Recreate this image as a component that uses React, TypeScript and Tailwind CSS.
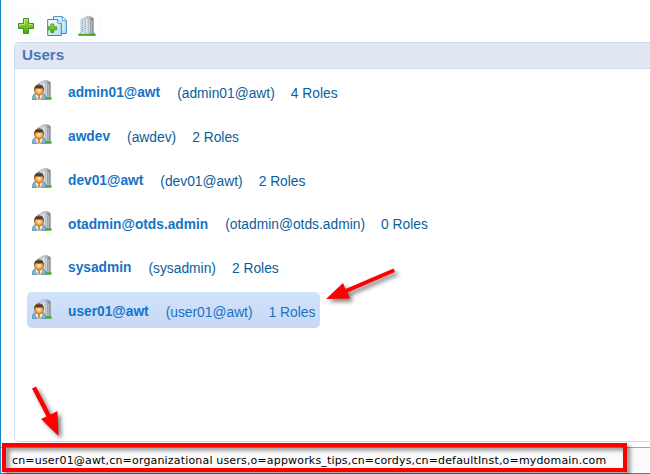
const users = [
  { name: 'admin01@awt', roles: 4 },
  { name: 'awdev', roles: 2 },
  { name: 'dev01@awt', roles: 2 },
  { name: 'otadmin@otds.admin', roles: 0 },
  { name: 'sysadmin', roles: 2 },
  { name: 'user01@awt', roles: 1, selected: true },
];

function Defs() {
  return (
    <svg className="absolute h-0 w-0" aria-hidden="true">
      <defs>
        <linearGradient id="green" x1="0" y1="0" x2="0" y2="1">
          <stop offset="0" stopColor="#a9dc45" />
          <stop offset="1" stopColor="#46a71b" />
        </linearGradient>
        <linearGradient id="side" x1="0" y1="0" x2="1" y2="0">
          <stop offset="0" stopColor="#c6c8ca" />
          <stop offset="1" stopColor="#777b80" />
        </linearGradient>
        <linearGradient id="paper" x1="0" y1="0" x2="1" y2="1">
          <stop offset="0" stopColor="#ffffff" />
          <stop offset="1" stopColor="#b4dcf5" />
        </linearGradient>
        <radialGradient id="face" cx="0.5" cy="0.48" r="0.5">
          <stop offset="0" stopColor="#fff0cf" />
          <stop offset="0.45" stopColor="#f8bf72" />
          <stop offset="1" stopColor="#dd8420" />
        </radialGradient>
      </defs>
    </svg>
  );
}

function PlusIcon() {
  return (
    <svg width="18" height="18" viewBox="0 0 18 18">
      <path d="M6.5 1.5h5v5h5v5h-5v5h-5v-5h-5v-5h5z" fill="url(#green)" stroke="#3c9415" strokeLinejoin="round" />
      <path d="M7.5 7.5v-5h3M2.5 10V7.5h5M11.5 7.5h4" fill="none" stroke="#c5ea76" strokeWidth="0.9" />
    </svg>
  );
}

function CopyIcon() {
  return (
    <svg width="20" height="20" viewBox="0 0 20 20">
      <path d="M6.5.7h9l3.800 3.800v13H6.500z" fill="url(#paper)" stroke="#3489c5" />
      <path d="M15.300.9v3.800h3.800" fill="#fff" stroke="#3489c5" strokeWidth="0.8" />
      <path d="M.7 3.500h10l3.600 3.600v12.400H.7z" fill="url(#paper)" stroke="#3489c5" />
      <path d="M10.600 3.700v3.600h3.500" fill="#fff" stroke="#3489c5" strokeWidth="0.8" />
      <path d="M3.800 8h3v2.800h2.800v3H6.800v2.800h-3v-2.800H1v-3h2.800z" fill="url(#green)" stroke="#369414" strokeWidth="0.8" />
    </svg>
  );
}

function Building() {
  return (
    <>
      <path d="M2.500 3.500 7 1.200 8.500.3h4l2.800 1.500v16.400H2.500z" fill="#b7bdc3" />
      <path d="M10 1.200 12.500.4l3 1.800V18H10z" fill="url(#side)" />
      <path d="M3.500 4 9.500 2v15.500l-6 .5z" fill="#dcecf7" />
      <path d="M4.800 4.200V17M7.300 3.200v14" stroke="#69aadb" strokeWidth="1.200" strokeDasharray="1.400 .7" />
      <path d="M11.500 4v13M13.800 5v12" stroke="#e2e7eb" strokeWidth="0.9" strokeDasharray="1.200 .9" />
    </>
  );
}

function BuildingIcon() {
  return (
    <svg width="18" height="20" viewBox="0 0 18 20">
      <path d="M.5 18 3 16.500h12l2.500 1.500v1.700H.5z" fill="#56ae2e" />
      <Building />
      <path d="M.5 18h17v1.600H.5z" fill="#4fa62c" />
    </svg>
  );
}

function UserIcon() {
  return (
    <svg width="20" height="20" viewBox="0 0 20 20" className="block shrink-0">
      <g transform="translate(3)"><Building /></g>
      <path d="M13 17.200h6.500v2.500H13z" fill="#4ca82e" />
      <path d="M.4 19.700c0-3.800.8-5.500 3.200-6.200h7c2.400.7 3.400 2.400 3.400 6.200z" fill="#7fb3d6" stroke="#4e7f9f" strokeWidth="0.7" />
      <path d="M3.400 14h7.200l-1.800 5.600H5.200z" fill="#f8fbfd" />
      <path d="M5.400 14h3.200L7.800 16l.8 2.400L7 19.600l-1.600-1.200.8-2.400z" fill="#f18a1c" />
      <ellipse cx="7" cy="10.700" rx="4.500" ry="4.600" fill="url(#face)" stroke="#a8611d" strokeWidth="0.6" />
      <path d="M2.300 10.700C1.700 6.800 3.900 4.500 7 4.500s5.300 2.300 4.700 6.200c-.6-1-.8-1.900-1.400-2.700-2.200.7-4.400.7-6.600 0-.6.800-.8 1.700-1.400 2.700z" fill="#5b371d" />
      <path d="M4.700 6.300c1.200-.9 3-.9 4.300-.3" fill="none" stroke="#93673f" strokeWidth="0.7" />
    </svg>
  );
}

export default function App() {
  return (
    <div className="relative flex h-[474px] w-[650px] flex-col overflow-hidden border-l border-[#168acb] bg-white font-['Liberation_Sans',Arial,sans-serif]">
      <Defs />
      <div className="flex h-[42px] shrink-0 items-end gap-[2px] pb-[2px] pl-[13px]">
        <button className="flex h-[27px] w-[27px] items-center justify-center rounded-md border border-[#fafafa] pr-[3px] pb-[2px]"><PlusIcon /></button>
        <button className="flex h-[27px] w-[28px] items-center justify-center rounded-md border border-[#fafafa] pb-[2px]"><CopyIcon /></button>
        <button className="flex h-[27px] w-[28px] items-center justify-center rounded-md border border-[#fafafa] pb-[2px]"><BuildingIcon /></button>
      </div>
      <main className="ml-[13px] flex h-[400px] shrink-0 flex-col overflow-hidden rounded-l-[5px] border border-r-0 border-[#cbdcf0]">
        <h1 className="h-[26px] shrink-0 border-b border-[#cbdcf0] bg-[#e1e7f3] pl-[7px] text-[15.200px] leading-[23px] font-bold text-[#4a78b5]">Users</h1>
        <div className="flex flex-col items-start gap-[7.800px] pt-[4px] pl-3">
          {users.map((u) => (
            <div
              key={u.name}
              className={`flex h-9 items-center rounded-[5px] px-[5px] ${u.selected ? 'bg-linear-to-b from-[#d2e3fc] to-[#c6d8f2]' : ''}`}
            >
              <div className="-mt-[2px]"><UserIcon /></div>
              <span className="mt-[5px] ml-4 text-[13.750px] font-bold text-[#1673c5]">{u.name}</span>
              <span className={`mt-[6.500px] ml-[17px] text-[13.800px] ${u.selected ? 'text-[#1673c5]' : 'text-[#095e9c]'}`}>({u.name})</span>
              <span className={`mt-[6.500px] ml-4 text-[13.800px] ${u.selected ? 'text-[#1673c5]' : 'text-[#095e9c]'}`}>{u.roles} Roles</span>
            </div>
          ))}
        </div>
      </main>
      <footer className="mt-[5px] flex h-[27px] shrink-0 flex-col bg-[#fbfbfb]">
        <div className="h-px bg-[#7caee9]" />
        <p className="flex h-[25px] items-center pt-[2px] pl-[11px] font-['DejaVu_Sans',Verdana,sans-serif] text-[11px] tracking-[0.175px] whitespace-nowrap text-black">
          cn=user01@awt,cn=organizational users,o=appworks_tips,cn=cordys,cn=defaultInst,o=mydomain.com
        </p>
        <div className="h-px bg-[#238dcc]" />
      </footer>
      <svg width="650" height="474" viewBox="0 0 650 474" className="pointer-events-none absolute top-0 -left-px drop-shadow-[3px_3px_2px_rgba(0,0,0,0.5)]">
        <rect x="4" y="445" width="621" height="25" fill="none" stroke="red" strokeWidth="4" />
        <path d="m326 299 17-16 2.500 6 48-20.500 1.500 3.500-47.500 20.500 2.500 6z" fill="red" />
        <path d="m58.500 436-17.500-17 5.500-2.500-14.500-28 4-2 14.500 28 7-3.500z" fill="red" />
      </svg>
    </div>
  );
}
